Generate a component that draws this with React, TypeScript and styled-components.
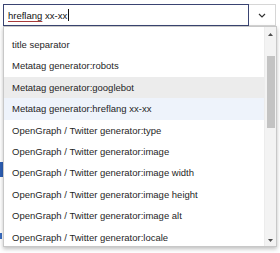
import React from 'react';
import styled, { createGlobalStyle } from 'styled-components';

const GlobalStyle = createGlobalStyle`
  html, body {
    margin: 0;
    padding: 0;
    background: #ffffff;
  }
  body {
    font-family: "Liberation Sans", Arial, sans-serif;
    color: #222;
  }
`;

const Page = styled.div`
  position: relative;
  width: 280px;
  height: 253px;
  overflow: hidden;
  background: #fff;
`;

const Combo = styled.div`
  position: relative;
  margin: 4px 4px 0 3px;
`;

const InputRow = styled.div`
  display: flex;
  height: 22px;
`;

const Field = styled.div`
  flex: 1;
  display: flex;
  align-items: center;
  padding: 0 4px;
  border: 1px solid #3a4472;
  font-size: 9.5px;
  color: #111;
`;

const Misspelled = styled.span`
  text-decoration: underline;
  text-decoration-color: #a83a3a;
  text-underline-offset: 2px;
`;

const Caret = styled.span`
  display: inline-block;
  width: 1px;
  height: 12px;
  margin-left: 1px;
  background: #111;
`;

const Toggle = styled.div`
  width: 26px;
  display: flex;
  align-items: center;
  justify-content: center;
  border: 1px solid #d6d6d6;
  border-left: none;
  background: #fff;
`;

// dropdown floats over the page content below the input
const Popup = styled.div`
  position: absolute;
  top: 22px;
  left: 0;
  width: 274px;
  height: 221px;
  display: flex;
  background: #fff;
  border: 1px solid #c8c8c8;
  box-shadow: 0 2px 4px rgba(0, 0, 0, 0.25);
  box-sizing: border-box;
`;

const Options = styled.ul`
  flex: 1;
  list-style: none;
  margin: 0;
  padding: 7px 0 0;
  overflow: hidden;
`;

const Option = styled.li<{ state?: 'hover' | 'selected' }>`
  height: 21.4px;
  line-height: 21.4px;
  padding-left: 8px;
  font-size: 9.5px;
  white-space: nowrap;
  color: #1f1f1f;
  background: ${p =>
    p.state === 'hover' ? '#ececec' : p.state === 'selected' ? '#eef3fb' : 'transparent'};
`;

const Scrollbar = styled.div`
  width: 11px;
  display: flex;
  flex-direction: column;
  align-items: center;
  padding: 3px 0 2px;
  background: #f3f3f3;
  border-left: 1px solid #ececec;
`;

const Arrow = styled.div`
  height: 8px;
  display: flex;
  align-items: center;
  justify-content: center;
`;

const Track = styled.div`
  flex: 1;
  width: 100%;
  padding-top: 18px;
  display: flex;
  justify-content: center;
`;

const Thumb = styled.div`
  width: 8px;
  height: 72px;
  background: #c3c3c3;
`;

const Backdrop = styled.div`
  display: flex;
  flex-direction: column;
  gap: 56px;
  padding-top: 136px;
`;

const Tag = styled.div`
  width: 10px;
  height: 15px;
  background: #2d5fb4;
`;

const LinkMark = styled.div`
  width: 2px;
  height: 6px;
  background: #3a6cc0;
`;

const items = [
  'title separator',
  'Metatag generator:robots',
  'Metatag generator:googlebot',
  'Metatag generator:hreflang xx-xx',
  'OpenGraph / Twitter generator:type',
  'OpenGraph / Twitter generator:image',
  'OpenGraph / Twitter generator:image width',
  'OpenGraph / Twitter generator:image height',
  'OpenGraph / Twitter generator:image alt',
  'OpenGraph / Twitter generator:locale',
];

const App: React.FC = () => {
  return (
    <Page>
      <GlobalStyle />
      <Combo>
        <InputRow>
          <Field>
            <Misspelled>hreflang</Misspelled>&nbsp;xx-xx
            <Caret />
          </Field>
          <Toggle>
            <svg width="8" height="5" viewBox="0 0 8 5">
              <path d="M1 1l3 3 3-3" fill="none" stroke="#333" strokeWidth="1.2" />
            </svg>
          </Toggle>
        </InputRow>
        <Popup>
          <Options>
            {items.map((item, i) => (
              <Option key={item} state={i === 2 ? 'hover' : i === 3 ? 'selected' : undefined}>
                {item}
              </Option>
            ))}
          </Options>
          <Scrollbar>
            <Arrow>
              <svg width="5" height="3" viewBox="0 0 5 3">
                <path d="M0 3L2.5 0L5 3z" fill="#505050" />
              </svg>
            </Arrow>
            <Track>
              <Thumb />
            </Track>
            <Arrow>
              <svg width="5" height="3" viewBox="0 0 5 3">
                <path d="M0 0L2.5 3L5 0z" fill="#505050" />
              </svg>
            </Arrow>
          </Scrollbar>
        </Popup>
      </Combo>
      <Backdrop>
        <Tag />
        <LinkMark />
      </Backdrop>
    </Page>
  );
};

export default App;
